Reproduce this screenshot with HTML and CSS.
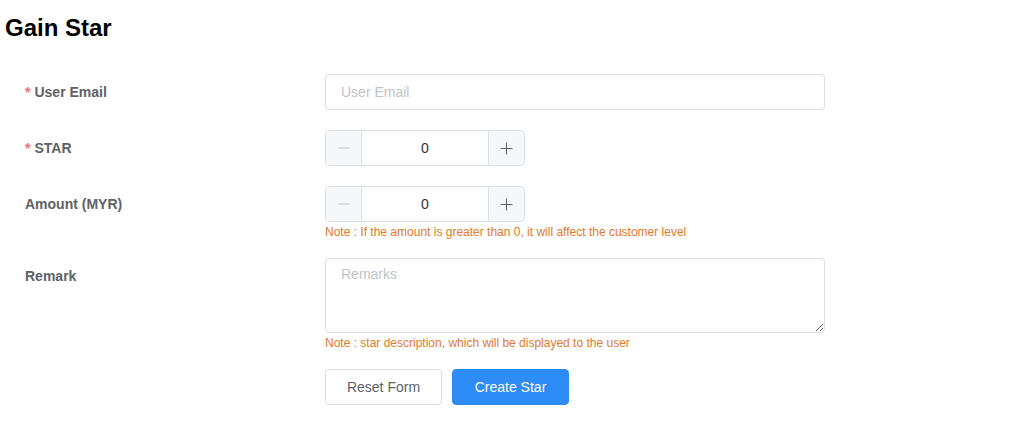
FILE: index.html
```html
<!DOCTYPE html>
<html>
<head>
<meta charset="utf-8">
<link rel="stylesheet" href="styles.css">
</head>
<body>
<div class="page">
  <h1 class="title">Gain Star</h1>
  <form class="form">
    <div class="item">
      <label class="label required">User Email</label>
      <div class="content">
        <input class="input" type="text" placeholder="User Email">
      </div>
    </div>
    <div class="item">
      <label class="label required">STAR</label>
      <div class="content">
        <div class="number">
          <span class="num-btn dec disabled"><svg width="12" height="12" viewBox="0 0 12 12"><path d="M0.5 6h11" stroke="currentColor" stroke-width="1"/></svg></span>
          <input class="num-input" type="text" value="0">
          <span class="num-btn inc"><svg width="13" height="13" viewBox="0 0 13 13"><path d="M0.5 6.5h12M6.5 0.5v12" stroke="currentColor" stroke-width="1"/></svg></span>
        </div>
      </div>
    </div>
    <div class="item">
      <label class="label">Amount (MYR)</label>
      <div class="content">
        <div class="number">
          <span class="num-btn dec disabled"><svg width="12" height="12" viewBox="0 0 12 12"><path d="M0.5 6h11" stroke="currentColor" stroke-width="1"/></svg></span>
          <input class="num-input" type="text" value="0">
          <span class="num-btn inc"><svg width="13" height="13" viewBox="0 0 13 13"><path d="M0.5 6.5h12M6.5 0.5v12" stroke="currentColor" stroke-width="1"/></svg></span>
        </div>
        <div class="note">Note : If the amount is greater than 0, it will affect the customer level</div>
      </div>
    </div>
    <div class="item">
      <label class="label">Remark</label>
      <div class="content">
        <textarea class="textarea" placeholder="Remarks"></textarea>
        <div class="note">Note : star description, which will be displayed to the user</div>
      </div>
    </div>
    <div class="item">
      <div class="label"></div>
      <div class="content buttons">
        <button type="button" class="btn">Reset Form</button>
        <button type="button" class="btn primary">Create Star</button>
      </div>
    </div>
  </form>
</div>
</body>
</html>
```
FILE: styles.css
```css
html, body {
  margin: 0;
  padding: 0;
  background: #ffffff;
}
body {
  font-family: "Liberation Sans", Arial, Helvetica, sans-serif;
  color: #606266;
}
.page {
  padding: 0 5px;
}
.title {
  margin: 14px 0 32px 0;
  font-size: 24px;
  line-height: 28px;
  font-weight: bold;
  color: #000000;
}
.form {
  padding-left: 20px;
}
.item {
  display: flex;
  margin-bottom: 20px;
}
.label {
  width: 300px;
  flex: none;
  font-size: 14px;
  font-weight: bold;
  line-height: 36px;
  color: #606266;
}
.label.required::before {
  content: "*";
  color: #f56c6c;
  margin-right: 4px;
}
.content {
  width: 500px;
  font-size: 14px;
}
.input {
  display: block;
  box-sizing: border-box;
  width: 500px;
  height: 36px;
  padding: 0 15px;
  border: 1px solid #dcdfe6;
  border-radius: 4px;
  font-family: inherit;
  font-size: 14px;
  color: #606266;
  outline: none;
}
.input::placeholder, .textarea::placeholder {
  color: #c0c4cc;
}
.number {
  display: flex;
  box-sizing: border-box;
  width: 200px;
  height: 36px;
  border: 1px solid #dcdfe6;
  border-radius: 4px;
  overflow: hidden;
}
.num-btn {
  width: 35px;
  flex: none;
  display: flex;
  align-items: center;
  justify-content: center;
  background: #f5f7fa;
  color: #606266;
}
.num-btn.dec {
  border-right: 1px solid #dcdfe6;
}
.num-btn.inc {
  border-left: 1px solid #dcdfe6;
}
.num-btn.disabled {
  color: #c0c4cc;
}
.num-input {
  flex: 1;
  min-width: 0;
  border: none;
  outline: none;
  padding: 0;
  text-align: center;
  font-family: inherit;
  font-size: 14px;
  color: #303133;
  background: #ffffff;
}
.note {
  padding-top: 4px;
  font-size: 12px;
  line-height: 12px;
  color: #e07a2a;
}
.textarea {
  display: block;
  box-sizing: border-box;
  width: 500px;
  height: 75px;
  padding: 5px 15px;
  border: 1px solid #dcdfe6;
  border-radius: 4px;
  font-family: inherit;
  font-size: 14px;
  line-height: 1.5;
  color: #606266;
  outline: none;
  resize: vertical;
}
.buttons {
  display: flex;
  gap: 10px;
}
.btn {
  box-sizing: border-box;
  width: 117px;
  height: 36px;
  padding: 0;
  border: 1px solid #dcdfe6;
  border-radius: 4px;
  background: #ffffff;
  color: #606266;
  font-family: inherit;
  font-size: 14px;
  cursor: pointer;
}
.btn.primary {
  background: #2d8cf6;
  border-color: #2d8cf6;
  color: #ffffff;
}
```
